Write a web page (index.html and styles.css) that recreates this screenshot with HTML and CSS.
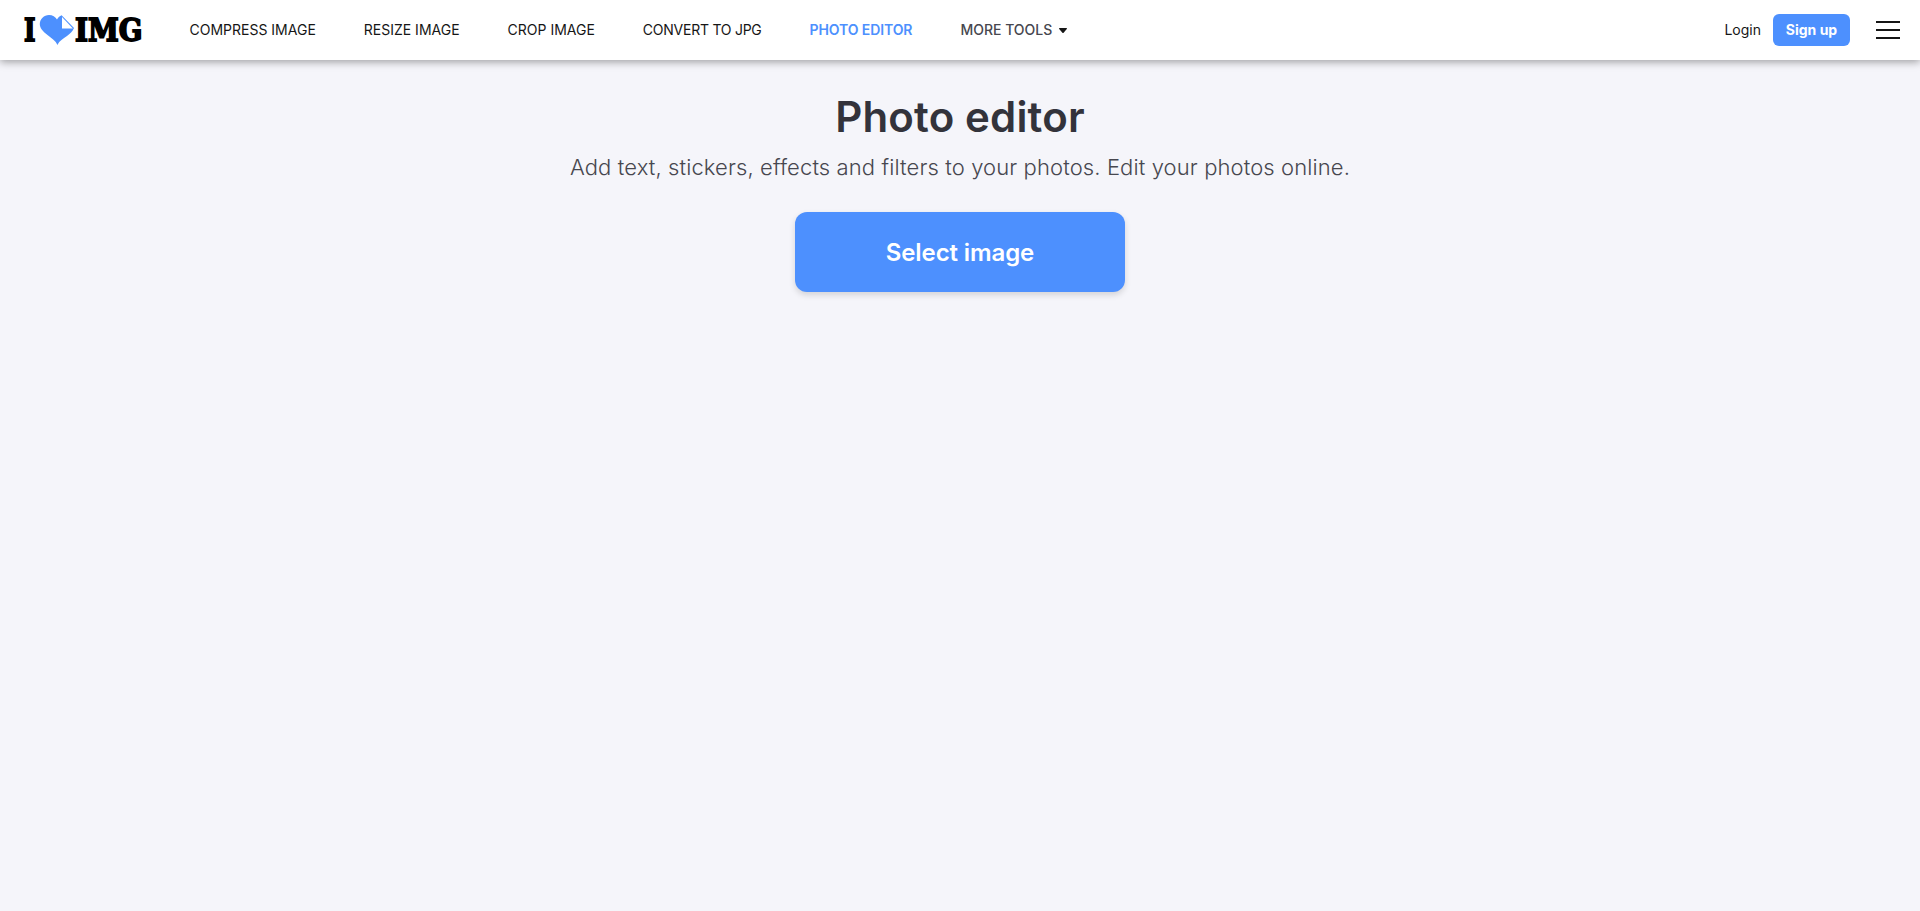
FILE: index.html
```
<!DOCTYPE html>
<html lang="en">
<head>
<meta charset="utf-8">
<title>Photo editor</title>
<link rel="stylesheet" href="styles.css">
</head>
<body>
<header class="header">
  <a class="brand" aria-label="I love IMG">
    <svg class="logo" width="122" height="48" viewBox="0 0 122 48">
      <g class="logo-text">
        <text x="0" y="35.200" textLength="11.500" lengthAdjust="spacingAndGlyphs">I</text>
        <text x="51" y="35.200" textLength="67.500" lengthAdjust="spacingAndGlyphs">IMG</text>
      </g>
      <path fill="#4d90fe" d="M33.500 39C31.500 34.500 28 32.500 23.500 29C18.500 25 15.800 22 15.800 18C15.800 13 20 9 25 9C28.500 9 31.500 10.800 33 13.500C34.200 11.500 35.800 10 37.600 9.300L50 22C48.500 25.500 46 27.500 43 30C39 33 35.500 34.500 33.500 39Z"/>
      <path fill="#fff" d="M38 11V22.500H48.900Z"/>
    </svg>
  </a>
  <nav class="nav">
    <a class="nav-link">COMPRESS IMAGE</a>
    <a class="nav-link">RESIZE IMAGE</a>
    <a class="nav-link">CROP IMAGE</a>
    <a class="nav-link nav-tight">CONVERT TO JPG</a>
    <a class="nav-link nav-active">PHOTO EDITOR</a>
    <a class="nav-link nav-more">MORE TOOLS
      <svg width="8" height="5" viewBox="0 0 8 5"><path d="M.6 0H7.400Q8.300.2 7.800 1L4.600 4.700Q4 5.200 3.400 4.700L.2 1Q-.3.2.6 0Z" fill="#161616"/></svg>
    </a>
  </nav>
  <div class="account">
    <a class="login">Login</a>
    <a class="signup">Sign up</a>
    <svg class="menu" width="24" height="20" viewBox="0 0 24 20"><path d="M0 2H24M0 10H24M0 18H24" stroke="#161616" stroke-width="2"/></svg>
  </div>
</header>
<main class="main">
  <h1 class="title">Photo editor</h1>
  <p class="subtitle">Add text, stickers, effects and filters to your photos. Edit your photos online.</p>
  <button class="select">Select image</button>
</main>
</body>
</html>
```
FILE: styles.css
```
* {
  box-sizing: border-box;
}

body {
  margin: 0;
  min-height: 100vh;
  background: #f5f5fa;
  color: #33333b;
  font-family: Inter, "Liberation Sans", sans-serif;
}

.header {
  display: flex;
  align-items: center;
  height: 60px;
  padding: 0 20px 0 24px;
  background: #fff;
  box-shadow: 0 2px 8px rgba(0, 0, 0, .36);
}

.brand {
  display: flex;
  width: 165.5px;
}

.logo {
  overflow: visible;
}

.logo-text {
  font: bold 31px "DejaVu Serif", serif;
  fill: #000;
  stroke: #000;
  stroke-width: 1.8;
}

.nav {
  display: flex;
  gap: 48px;
  font-size: 14px;
  line-height: 20px;
  color: #161616;
}

.nav-tight {
  letter-spacing: -.25px;
}

.nav-active {
  color: #4d90fe;
  font-weight: 600;
  letter-spacing: -.1px;
}

.nav-more {
  display: flex;
  align-items: center;
  gap: 7px;
  color: #47474f;
  font-weight: 500;
}

.account {
  display: flex;
  align-items: center;
  margin-left: auto;
  font-size: 14px;
  line-height: 20px;
  color: #161616;
}

.login {
  margin-right: 12px;
}

.signup {
  width: 77px;
  height: 32px;
  margin-right: 26px;
  border-radius: 6px;
  background: #4d90fe;
  color: #fff;
  font-weight: 700;
  line-height: 32px;
  text-align: center;
}

.main {
  display: flex;
  flex-direction: column;
  align-items: center;
  padding-top: 31px;
}

.title {
  margin: 0;
  font-size: 42px;
  font-weight: 600;
  line-height: 52px;
  letter-spacing: .15px;
}

.subtitle {
  margin: 8px 0 28px;
  font-size: 22px;
  font-weight: 300;
  line-height: 32px;
  letter-spacing: .11px;
  color: #47474f;
}

.select {
  width: 330px;
  height: 80px;
  margin-top: 1px;
  padding: 0;
  border: 0;
  border-radius: 12px;
  background: #4d90fe;
  box-shadow: 0 3px 6px rgba(0, 0, 0, .14);
  color: #fff;
  font: 600 24px Inter, "Liberation Sans", sans-serif;
  letter-spacing: -.1px;
}
```
